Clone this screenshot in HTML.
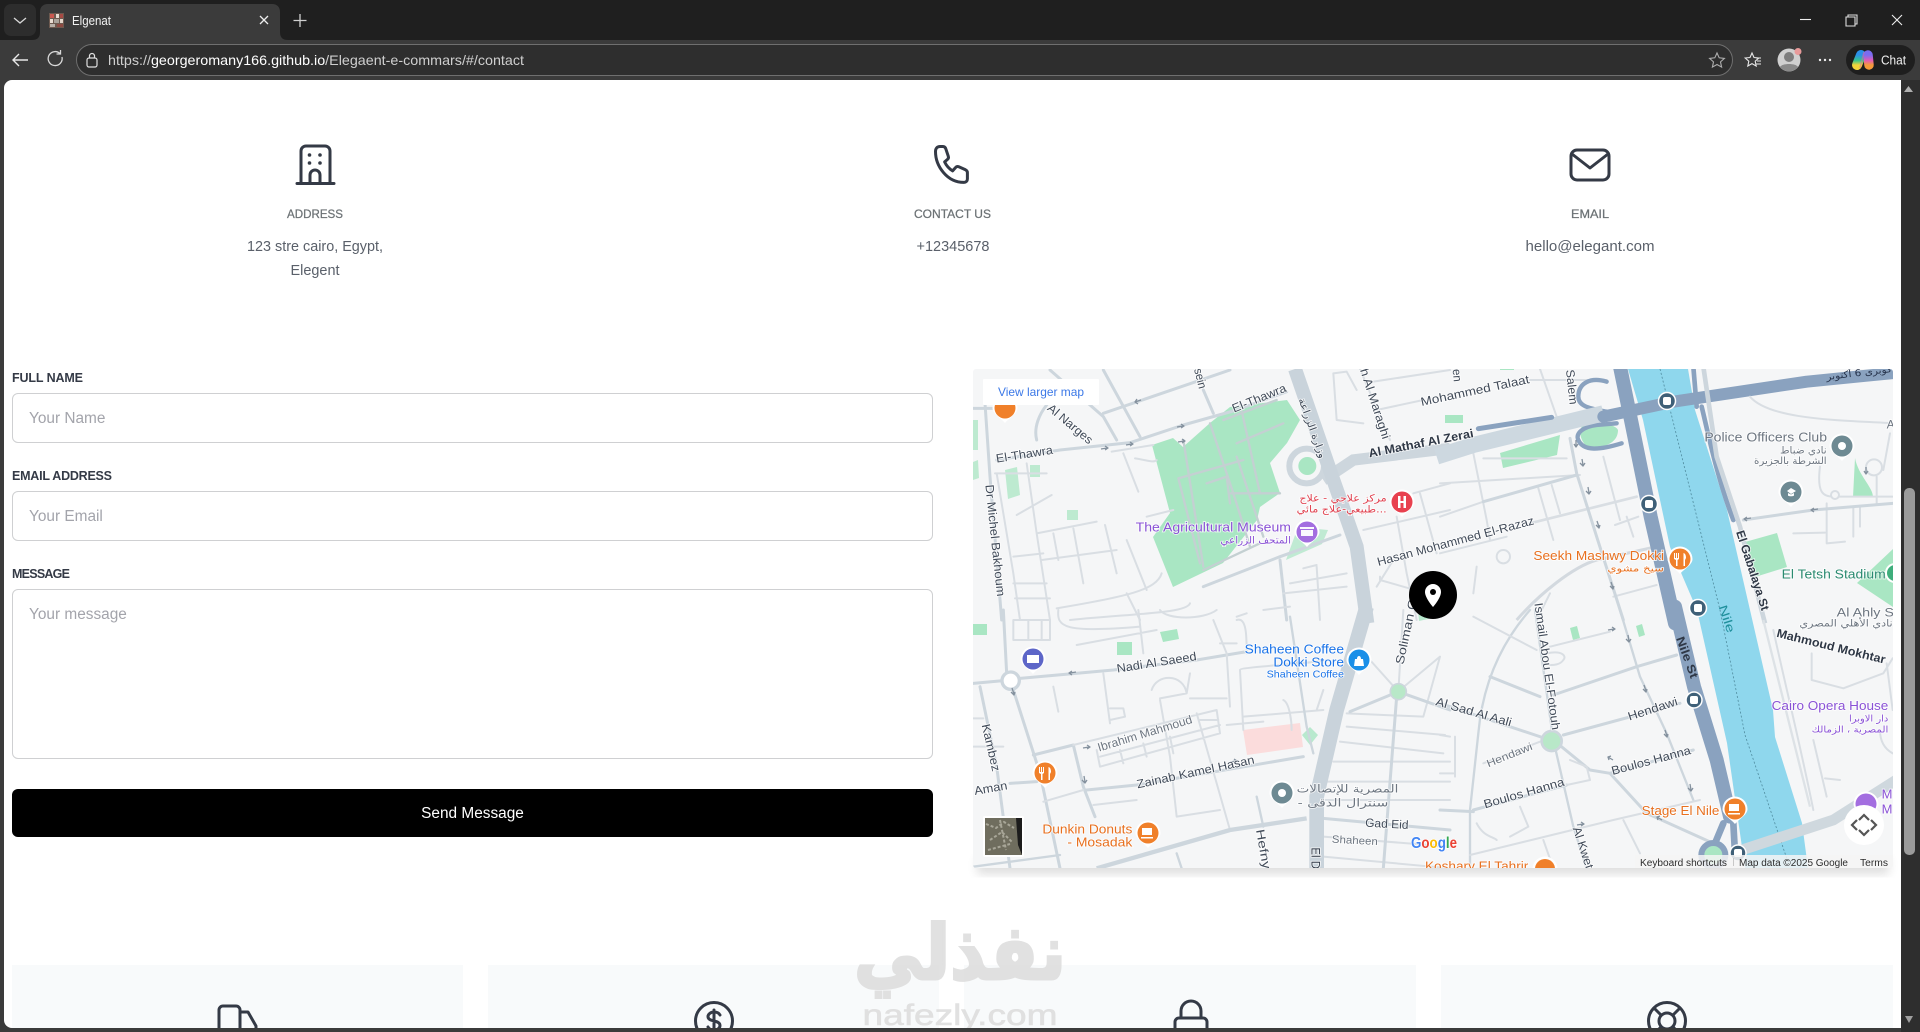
<!DOCTYPE html>
<html lang="en"><head><meta charset="utf-8"><title>Elgenat</title>
<style>
html,body{margin:0;padding:0;width:1920px;height:1032px;overflow:hidden;background:#3b3b3b;font-family:"Liberation Sans",sans-serif}
#v{position:absolute;left:0;top:0}
#page{position:absolute;left:4px;top:80px;width:1897px;height:948px;background:#fff;border-radius:8px 0 0 8px}
.f{position:absolute;left:12px;width:921px;box-sizing:border-box;border:1.3px solid #cfd0d2;border-radius:6px;background:#fff;padding:2px 16px 0;font:15.4px "Liberation Sans",sans-serif;color:#333;outline:0;resize:none;margin:0}
.f::placeholder{color:#a3a4ab;opacity:1}
button{position:absolute;left:12px;top:789px;width:921px;height:48px;border:0;border-radius:6px;background:#000;color:#fff;font:15.4px "Liberation Sans",sans-serif;padding:2px 0 0;margin:0}
.card{position:absolute;top:965px;height:63px;background:#f8fafb}
.ui{font-family:"Liberation Sans",sans-serif}
.lab{font:bold 12.5px "Liberation Sans",sans-serif;fill:#343a46}
.inf{font:12px "Liberation Sans",sans-serif;fill:#6c7275;stroke:#6c7275;stroke-width:.25px}
.val{font:15px "Liberation Sans",sans-serif;fill:#5a606a}
.m text{font-family:"Liberation Sans","DejaVu Sans",sans-serif;font-size:36px;paint-order:stroke;stroke:#fff;stroke-width:5px;stroke-opacity:.75}
.m .r{fill:#414b59}.m .b{fill:#2f3846;font-weight:bold}.m .g{fill:#6d7681}
.m .pu{fill:#8a52d6;font-size:39px}.m .or{fill:#e8701f;font-size:39px}.m .bl{fill:#1a73e8;font-size:39px}
.m .re{fill:#e0414f}.m .te{fill:#2a8a70;font-size:39px}
.m .ar{font-family:"DejaVu Sans",sans-serif;font-size:30px}
.rm{fill:none;stroke:#cdd6dd;stroke-width:9;stroke-linecap:round;stroke-linejoin:round}
.rn{fill:none;stroke:#d9dee3;stroke-width:6;stroke-linecap:round;stroke-linejoin:round}
.rb{fill:none;stroke:#8aa2bf;stroke-linecap:round;stroke-linejoin:round}
.ic{fill:none;stroke:#343a46;stroke-width:3;stroke-linecap:round;stroke-linejoin:round}
</style></head><body>
<div id="page"></div>
<div class="card" style="left:12px;width:451px"></div>
<div class="card" style="left:488px;width:451px"></div>
<div class="card" style="left:964px;width:452px"></div>
<div class="card" style="left:1441px;width:452px"></div>

<input class="f" style="top:393px;height:50px" placeholder="Your Name">
<input class="f" style="top:491px;height:50px" placeholder="Your Email">
<textarea class="f" style="top:589px;height:170px;padding-top:15px;line-height:20px" placeholder="Your message"></textarea>
<button>Send Message</button>

<svg id="v" width="1920" height="1032" viewBox="0 0 1920 1032" xmlns="http://www.w3.org/2000/svg">
<defs>
<clipPath id="mc"><rect x="973" y="369" width="920" height="499" rx="3"/></clipPath>
<clipPath id="pc"><rect x="0" y="80" width="1901" height="948"/></clipPath>
<filter id="bl" x="-20%" y="-20%" width="140%" height="140%"><feGaussianBlur stdDeviation="5"/></filter>
<path id="pin" d="M-12.5,0A12.5,12.5 0 1 1 12.5,0C12.5,6 4,10 0,15C-4,10 -12.5,6 -12.5,0Z" fill="#fff"/>
<linearGradient id="c1" x1="0" y1="0" x2="0" y2="1"><stop offset="0" stop-color="#2b8fe8"/><stop offset=".55" stop-color="#35c58b"/><stop offset="1" stop-color="#f2d43a"/></linearGradient>
<linearGradient id="c2" x1="0" y1="0" x2="0" y2="1"><stop offset="0" stop-color="#7a6cf0"/><stop offset=".55" stop-color="#e45bb5"/><stop offset="1" stop-color="#f59a3a"/></linearGradient>
</defs>

<!-- browser frame -->
<rect x="0" y="0" width="1920" height="40" fill="#1f1f1f"/>
<rect x="0" y="40" width="1920" height="40" fill="#3b3b3b"/>
<rect x="4" y="4" width="32" height="32" rx="7" fill="#2d2d2d"/>
<path d="M14,18l6,5 6,-5" fill="none" stroke="#d8d8d8" stroke-width="1.3"/>
<path d="M32,40c5,0 8,-2 8,-8V12c0,-5 3,-8 8,-8H272c5,0 8,3 8,8V32c0,6 3,8 8,8Z" fill="#3b3b3b"/>
<g>
<rect x="49" y="13" width="15" height="15" fill="#6d5a50"/>
<rect x="50" y="14" width="4" height="4" fill="#c9584f"/><rect x="56" y="14" width="3" height="4" fill="#e8dcd2"/><rect x="60" y="14" width="3" height="4" fill="#a64a44"/>
<rect x="50" y="19" width="3" height="4" fill="#e8dcd2"/><rect x="54" y="19" width="5" height="4" fill="#a9a29a"/><rect x="60" y="19" width="3" height="4" fill="#e3d6cb"/>
<rect x="50" y="24" width="5" height="3" fill="#b8b0a8"/><rect x="57" y="24" width="6" height="3" fill="#8e4a42"/>
</g>
<text class="ui" x="72" y="25" font-size="12.5" fill="#f2f2f2" textLength="39" lengthAdjust="spacingAndGlyphs">Elgenat</text>
<path d="M260,16l8,8M268,16l-8,8" stroke="#eee" stroke-width="1.3"/>
<path d="M300,14v13M293.5,20.5h13" stroke="#d0d0d0" stroke-width="1.3"/>
<path d="M1800,19.5h11" stroke="#eee" stroke-width="1.1"/>
<path d="M1846,17h9v9h-9ZM1848,17v-2h9v9h-2" fill="none" stroke="#ddd" stroke-width="1.1"/>
<path d="M1892,15l10,10M1902,15l-10,10" stroke="#eee" stroke-width="1.1"/>
<path d="M28,60H13M19,54l-6,6 6,6" fill="none" stroke="#e8e8e8" stroke-width="1.4"/>
<path d="M62,57a7,7 0 1 1 -2,-3.5M60.5,50v4h-4" fill="none" stroke="#d9d9d9" stroke-width="1.3"/>
<rect x="76.5" y="44.5" width="1656" height="31" rx="15.5" fill="#2e2e2e" stroke="#6f6f6f"/>
<rect x="87" y="58" width="10" height="9" rx="2" fill="none" stroke="#e0e0e0" stroke-width="1.2"/>
<path d="M89.5,58v-2a2.5,2.5 0 0 1 5,0v2" fill="none" stroke="#e0e0e0" stroke-width="1.2"/>
<text class="ui" x="108" y="65" font-size="14" fill="#cfcfcf" textLength="416" lengthAdjust="spacingAndGlyphs">https://<tspan fill="#fff">georgeromany166.github.io</tspan>/Elegaent-e-commars/#/contact</text>
<path d="M1717,53l2.2,4.8 5.2,.6 -3.9,3.5 1.1,5.2 -4.6,-2.6 -4.6,2.6 1.1,-5.2 -3.9,-3.5 5.2,-.6Z" fill="none" stroke="#aeaeae" stroke-width="1.1"/>
<path d="M1752,53l2,4.5 4.8,.5 -3.6,3.2 1,4.8 -4.2,-2.4 -4.2,2.4 1,-4.8 -3.6,-3.2 4.8,-.5Z" fill="none" stroke="#e8e8e8" stroke-width="1.1"/>
<path d="M1756,58h5M1757,61h4M1756,64h5" stroke="#e8e8e8" stroke-width="1.1"/>
<circle cx="1789" cy="60" r="11.5" fill="#d0d0d0"/><circle cx="1789" cy="57" r="5" fill="#7d7d7d"/><path d="M1780,67c2,-4 16,-4 18,0a11.5,11.5 0 0 1 -18,0Z" fill="#8a8a8a"/>
<circle cx="1798" cy="51.500" r="3.500" fill="#e89a9a"/>
<circle cx="1820" cy="60" r="1.200" fill="#eee"/><circle cx="1825" cy="60" r="1.200" fill="#eee"/><circle cx="1830" cy="60" r="1.200" fill="#eee"/>
<rect x="1846" y="45" width="69" height="30" rx="15" fill="#1e1e1e"/>
<path d="M1861,55L1857,65" stroke="url(#c1)" stroke-width="10" stroke-linecap="round" fill="none"/>
<path d="M1868,55L1869,65" stroke="url(#c2)" stroke-width="9.500" stroke-linecap="round" fill="none"/>
<path d="M1864,52L1860,68" stroke="#e4679f" stroke-width="1.500" opacity=".5"/>
<text class="ui" x="1881" y="64.500" font-size="12.5" fill="#f0f0f0" textLength="25" lengthAdjust="spacingAndGlyphs">Chat</text>
<rect x="1901" y="80" width="19" height="952" fill="#2e2e2e"/>
<rect x="1904" y="488" width="11" height="367" rx="5" fill="#9b9b9b"/>
<path d="M1904,92l4.500,-6 4.500,6Z" fill="#b0b0b0"/><path d="M1905,1016l4,7 4,-7Z" fill="#a0a0a0"/>

<!-- info -->
<g class="ic">
<path d="M297,183.500H334M301,183.500V151a5,5 0 0 1 5,-5H325a5,5 0 0 1 5,5V183.500M310,183.500V175a5,5 0 0 1 10,0V183.500"/>
</g>
<circle cx="309.500" cy="155" r="1.800" fill="#343a46"/><circle cx="320" cy="155" r="1.800" fill="#343a46"/><circle cx="309.500" cy="163" r="1.800" fill="#343a46"/><circle cx="320" cy="163" r="1.800" fill="#343a46"/>
<path class="ic" transform="translate(3,0)" d="M937,146.500h3c1.500,0 2.300,.8 2.800,2.300l2.500,7.500c.4,1.300 .1,2.400 -.9,3.200l-2.800,2.400c2,4.200 4.200,6.700 8,9l3,-3.400c.8,-1 2,-1.200 3.200,-.7l6.700,3c1.200,.6 1.900,1.500 1.900,2.800v6.300c0,2 -1.300,3.500 -3.400,3.500C944,182.500 932.500,166 932.500,151.500c0,-3 1.700,-5 4.500,-5Z"/>
<rect class="ic" x="1571" y="150" width="38" height="30" rx="6"/>
<path class="ic" d="M1572,154l18,14 18,-14"/>
<text class="inf" x="315" y="218" text-anchor="middle" textLength="56" lengthAdjust="spacingAndGlyphs">ADDRESS</text>
<text class="inf" x="952.500" y="218" text-anchor="middle" textLength="77" lengthAdjust="spacingAndGlyphs">CONTACT US</text>
<text class="inf" x="1590" y="218" text-anchor="middle" textLength="38" lengthAdjust="spacingAndGlyphs">EMAIL</text>
<text class="val" x="315" y="251" text-anchor="middle" textLength="136" lengthAdjust="spacingAndGlyphs">123 stre cairo, Egypt,</text>
<text class="val" x="315" y="275" text-anchor="middle" textLength="49" lengthAdjust="spacingAndGlyphs">Elegent</text>
<text class="val" x="953" y="251" text-anchor="middle" textLength="73" lengthAdjust="spacingAndGlyphs">+12345678</text>
<text class="val" x="1590" y="251" text-anchor="middle" textLength="129" lengthAdjust="spacingAndGlyphs">hello@elegant.com</text>

<!-- labels -->
<text class="lab" x="12" y="382" textLength="71" lengthAdjust="spacing">FULL NAME</text>
<text class="lab" x="12" y="480" textLength="100" lengthAdjust="spacing">EMAIL ADDRESS</text>
<text class="lab" x="12" y="578" textLength="58" lengthAdjust="spacing">MESSAGE</text>

<!-- map -->
<rect x="977" y="858" width="912" height="16" fill="#000" opacity=".13" filter="url(#bl)"/>
<g clip-path="url(#mc)">
<rect x="973" y="369" width="920" height="499" fill="#f5f6f7"/>

<!-- green areas -->
<g fill="#a9e6c3">
<path d="M1152,445L1173,438L1183,447L1210,423L1230,407L1287,400L1300,420L1287,443L1270,463L1280,493L1260,507L1257,520L1223,563L1173,587L1153,537L1170,513Z"/>
<path d="M1500,453L1560,435L1557,455L1503,468Z"/><path d="M1445,415h18v8h-18Z"/>
<path d="M1745,542L1777,533L1787,567L1755,577Z"/><path d="M1893,549L1857,583L1893,607Z"/>
<path d="M1855,458C1858,475 1873,487 1873,497H1853Z"/><path d="M1417,600l17,-3 3,20 -18,4Z" opacity=".8"/>
<path d="M1067,510h11v10h-11ZM1030,465h10v12h-10ZM1005,470l12,-3 3,28 -12,4ZM973,462l5,-2 1,18 -6,2ZM973,420h5v30h-5Z" opacity=".75"/>
<path d="M1117,642h15v13h-15ZM1160,632l17,-3 2,10 -16,3ZM973,624h14v11h-14ZM1570,628l7,-2 3,12 -7,2ZM1636,626l6,-2 3,11 -6,2Z"/>
<path d="M1302,735l8,-8 8,8 -8,10Z" opacity=".8"/><path d="M1500,358h14v12h-14Z"/>
<path d="M1286,560l36,-16 6,-14 -30,-3Z" opacity=".7"/>
<path d="M1583,425C1600,422 1615,424 1618,430C1618,440 1610,445 1600,447L1587,447C1580,440 1578,430 1583,425Z"/>
</g>
<path d="M1243,730l57,-7 3,24 -56,8Z" fill="#fbdcdc"/>

<!-- Nile -->
<path d="M1628,369H1688L1695,410L1727,510L1750,610L1773,710L1775,737L1802,823L1808,868H1745L1727,743L1697,610L1670,547L1643,420Z" fill="#8fd7ed"/>
<path d="M1660,369L1720,610L1745,735L1790,868" fill="none" stroke="#4f8b9e" stroke-width=".8" stroke-dasharray="2 2"/>

<g transform="translate(970,360) scale(.33333)">
<path class="rm" d="M80,300L270,270L480,248L640,195L800,150L950,95M400,160L780,30M400,30L510,230M240,30L400,170L440,240M700,90L730,160"/>
<path class="rm" d="M10,145H70M45,130L60,350L95,780M200,240C190,200 210,160 230,135"/>
<path class="rn" d="M170,310L200,520L240,780M75,340H230M80,340L130,640L150,780M200,520L380,485M215,600L440,570M130,590L220,580M250,520L265,600M310,505L340,670M405,495L440,640M130,670H230M135,715H240M140,465L245,405M460,280L505,395M425,275L550,255M495,295C530,300 550,310 560,300M470,540L530,690M575,640C560,690 470,710 260,745M530,470L610,450M470,700L510,780M660,730C650,760 500,760 300,780"/>
<path class="rn" style="stroke:#c4d0d2;stroke-width:7" d="M625,355L690,610M625,355L820,300M640,240L700,620M720,190L790,400L840,560M800,290L880,530M780,400L930,400M810,130L870,400M700,630L870,550M710,370L770,350L780,430M760,180L920,120M800,250L940,190"/>
<path class="rm" d="M700,680L930,590L1110,525M930,600L950,780"/>
<path class="rn" d="M1170,27L1260,240M1210,65L1440,30M1220,150L1360,120M1090,40L1100,180L1180,190M1090,40L1130,35L1160,90M1330,400L1440,370M1180,510L1440,450M1280,470L1310,640L1340,780M1350,400L1400,580M1230,650L1230,660L1440,720M1220,680L1270,600M1000,625L1040,615M960,670L1130,640M940,700L1130,680M880,750L960,740M800,770L830,760M1040,620L1050,780"/>
<circle cx="1010" cy="318" r="52" fill="#f5f6f7" stroke="#cdd6dd" stroke-width="18"/>
<circle cx="1012" cy="318" r="27" fill="#a9e6c3"/>
<path d="M1060,360L1150,300L1440,265" fill="none" stroke="#cdd6dd" stroke-width="34"/>
<path d="M975,27L1090,360L1160,560L1192,790" fill="none" stroke="#c9d3db" stroke-width="42"/>
</g>

<g transform="translate(1440,360) scale(.33333)">
<path class="rn" d="M300,27L350,170M270,60H500M0,370L420,345M0,470L130,425M100,280L140,480L150,540M295,385L340,540M335,375L360,460M490,290L540,480M525,495L595,470M560,470L580,530M0,580L200,530M110,620L100,700M290,780L330,700M520,710L650,675M130,295H380"/>
<path class="rn" style="stroke-width:8" d="M270,490L590,410"/>
<path class="rm" d="M390,235L410,340L470,530L550,780M130,425L410,345"/>
<path d="M230,780C300,700 400,620 470,600L650,560" fill="none" stroke="#d3d9df" stroke-width="9"/>
<circle cx="190" cy="590" r="20" fill="none" stroke="#d9dee3" stroke-width="6"/>
<path class="rb" stroke-width="13" d="M500,65C450,50 415,70 415,110C415,140 450,145 500,155"/>
<path class="rb" stroke-width="13" d="M545,250C480,270 430,275 415,240C405,220 430,200 470,195L530,190"/>
<path d="M-10,290L100,255L490,160" fill="none" stroke="#cdd8e0" stroke-width="48"/>
<path class="rb" stroke-width="15" d="M115,206L335,172"/>
<path class="rb" stroke-width="42" d="M540,20L575,190L632,470L705,790"/>
<path class="rb" stroke-width="36" d="M490,170L700,125L1100,65L1400,35"/>
<path class="rb" stroke-width="14" d="M760,20L770,140M785,140C800,200 830,350 880,480"/>
<path d="M790,20L830,290L900,500L975,790" fill="none" stroke="#cdd6dd" stroke-width="14"/>
<path class="rn" d="M930,110C990,180 1200,180 1358,190M1140,320C1130,400 1150,410 1180,410L1358,410M1310,350V430M1350,220L1330,330M1060,520L1155,518M1160,430L1160,550L1215,545M1240,440V530M1260,440V500"/>
<circle cx="1302" cy="322" r="24" fill="#f5f6f7" stroke="#d9dee3" stroke-width="6"/>
<circle cx="1185" cy="405" r="12" fill="#f5f6f7" stroke="#d9dee3" stroke-width="6"/>
<path class="rm" d="M910,480L1120,450L1358,430"/>
</g>

<g transform="translate(970,610) scale(.33333)">
<path class="rm" d="M100,0L110,190M10,220L100,212L150,205L430,180L680,150L830,125M130,240L210,490L270,775M30,230L80,470L120,775M190,435L310,405L340,530L375,620M350,540L500,525L1000,440M120,520L200,515"/>
<circle cx="122" cy="212" r="26" fill="#fff" stroke="#cdd6dd" stroke-width="10"/>
<path class="rn" d="M10,325H40M10,410H100M220,575L340,540M370,585L500,570M310,405L740,300M380,420L390,470L750,370M680,310L780,660M450,420L460,460M520,400L530,440M600,380L610,430M390,440L750,345M690,330H745M740,300L750,370M130,30H240V90H130ZM175,30V90M215,30V90M265,0C260,50 280,70 510,50M505,0L520,130M320,105L560,60M570,0C590,30 700,30 740,0M570,270L600,440L620,620L750,600M570,265L650,250L660,190M545,240C560,190 640,190 650,250M660,265H770M770,130L780,290M730,30L770,130M750,100H800M800,30C830,20 830,80 830,130M810,180C810,170 1040,160 1070,150M810,180L820,360M820,320L1060,300M770,345L880,335M940,270C960,280 965,340 965,360M1060,240L1040,300M400,190L420,340M420,295H460L465,320L420,330M250,230L265,305"/>
<path class="rm" style="stroke-width:7" d="M960,20L1010,350L1030,430"/>
<path class="rn" d="M1130,350L1425,375M1110,395L1420,430M1090,455H1440M1070,515H1440M1050,570H1440M1060,680L1440,710M1060,740L1440,775M1200,150L1285,245M1300,0L1285,245M1410,140L1290,240M1410,140L1360,320L1130,310"/>
<path class="rm" d="M1140,305L1285,245L1440,300M1280,260L1240,775M1060,625L1440,660"/>
<path d="M380,775L780,660L1010,625" fill="none" stroke="#cdd6dd" stroke-width="13"/>
<path class="rm" style="stroke-width:7" d="M620,730L635,775M860,560L880,650M10,770L270,735"/>
<path d="M1190,-10L1100,300L1040,560L1040,790" fill="none" stroke="#c9d3db" stroke-width="44"/>
<circle cx="1285" cy="245" r="24" fill="#b8e8c8" stroke="#cdd6dd" stroke-width="5"/>
</g>

<g transform="translate(1440,610) scale(.33333)">
<path class="rm" style="stroke-width:7" d="M285,0L340,390L400,650L440,775M270,0C200,80 130,200 115,370L90,600L90,775M540,0L600,200L680,370L760,570"/>
<path class="rm" d="M340,255L590,170L710,135M150,200L300,260M370,375L720,280M0,280L330,390M340,390L450,480L510,490L760,420M510,490L620,610L820,700M100,600L380,525M0,600L100,605"/>
<path class="rn" d="M100,20L290,120M130,460L300,395M380,525L450,510L440,470L390,450M240,590L265,650L210,680M110,640C130,680 160,680 170,690M0,375L30,380M45,380V500M0,490H40M90,735L520,630L780,570M310,690L340,775M550,630L600,730M330,110L510,65M320,130C370,120 380,140 370,150C360,165 340,165 330,165M1000,60C1030,200 1080,400 1120,600M1120,390L1160,560M1155,505L1200,510M1115,210L1210,235L1330,190L1358,145M1115,130V210M1340,160L1358,300M1320,360C1320,400 1340,420 1358,430"/>
<circle cx="335" cy="393" r="30" fill="#b8e8c8" stroke="#cdd6dd" stroke-width="8"/>
<path class="rb" stroke-width="42" d="M705,-10L762,230L830,450L870,620"/>
<path class="rb" stroke-width="20" d="M850,640L825,700M880,640L885,730"/>
<path d="M890,725L1180,630L1400,490" fill="none" stroke="#cfd8de" stroke-width="32"/>
<path d="M970,30L1040,310L1110,590" fill="none" stroke="#dde2e6" stroke-width="7"/>
<circle cx="820" cy="735" r="36" fill="#a9e6c3" stroke="#8aa2bf" stroke-width="18"/>
</g>

<!-- arrows -->
<g fill="none" stroke="#84919e" stroke-width="1.300" stroke-linejoin="round">
<path d="M1135,402l6,-2m-4,-1l-2,3 3,2M1177,427l6,-1m-2,-2l3,2 -3,2M1101,449l6,-1m-2,-2l3,2 -3,2M1126,445l6,-1m-2,-2l3,2 -3,2M1178,442l6,-1m-2,-2l3,2 -3,2"/>
<path d="M1576,440v6m-2,-2l2,3 2,-3M1582,459l1,6m-3,-2l3,3 2,-3M1588,487l1,6m-3,-2l3,3 2,-3M1597,521l2,6m-3,-2l3,3 1,-3M1611,582l2,6m-3,-2l3,3 1,-3"/>
<path d="M1745,519l6,-1m-4,-1l-3,2 3,2M1812,510l6,-1m-4,-1l-3,2 3,2M1866,467v6m-2,-2l2,3 2,-3"/>
<path d="M1070,673l6,-1m-4,-1l-3,2 3,2M1012,688l2,6m-3,-2l3,3 1,-3M1083,748l6,-1m-2,-2l3,2 -3,2M1084,776l1,6m-3,-2l3,3 2,-3M1230,762l6,-1m-2,-2l3,2 -3,2"/>
<path d="M1608,630l6,-1m-2,-2l3,2 -3,2M1628,635l1,6m-3,-2l3,3 2,-3M1644,685l2,6m-3,-2l3,3 1,-3M1665,730l2,6m-3,-2l3,3 1,-3M1690,784l1,6m-3,-2l3,3 2,-3M1577,825l6,-1m-2,-2l3,2 -3,2M1662,820l-5,-3m1,3l-1,-3 3,-1M1613,760l-5,-3m1,3l-1,-3 3,-1"/>
</g>

<!-- pins -->
<g>
<use href="#pin" x="1005" y="408"/><circle cx="1005" cy="408" r="10.500" fill="#f0802a"/>
<use href="#pin" x="1402" y="502"/><circle cx="1402" cy="502" r="10.500" fill="#e8414f"/>
<use href="#pin" x="1307" y="532"/><circle cx="1307" cy="532" r="10.500" fill="#a36ee0"/>
<use href="#pin" x="1680" y="559"/><circle cx="1680" cy="559" r="10.500" fill="#f0802a"/>
<use href="#pin" x="1842" y="446"/><circle cx="1842" cy="446" r="10.500" fill="#6e8a93"/><circle cx="1842" cy="446" r="4" fill="#fff"/>
<use href="#pin" x="1791" y="492"/><circle cx="1791" cy="492" r="10.500" fill="#6e8a93"/>
<use href="#pin" x="1033" y="659"/><circle cx="1033" cy="659" r="10.500" fill="#5d66c8"/>
<use href="#pin" x="1359" y="660"/><circle cx="1359" cy="660" r="10.500" fill="#1a8fe8"/>
<use href="#pin" x="1045" y="773"/><circle cx="1045" cy="773" r="10.500" fill="#f0802a"/>
<use href="#pin" x="1148" y="833"/><circle cx="1148" cy="833" r="10.500" fill="#f0802a"/>
<use href="#pin" x="1282" y="793"/><circle cx="1282" cy="793" r="10.500" fill="#6e8a93"/><circle cx="1282" cy="793" r="4" fill="#fff"/>
<use href="#pin" x="1735" y="809"/><circle cx="1735" cy="809" r="10.500" fill="#f0802a"/>
<use href="#pin" x="1545" y="869"/><circle cx="1545" cy="869" r="10" fill="#f0802a"/>
<use href="#pin" x="1866" y="804"/><circle cx="1866" cy="804" r="10.500" fill="#a36ee0"/>
<circle cx="1895" cy="573" r="10" fill="#fff"/><circle cx="1895" cy="573" r="8" fill="#3fae7c"/>
</g>
<g fill="#fff">
<path d="M1398,496h2.500v5h3v-5h2.500v12h-2.500v-5h-3v5h-2.500Z"/>
<path d="M1300,527h14v2h-14ZM1301,530h12v6h-12Z" opacity=".95"/>
<path d="M1674,553h1v5h1v-5h1v5h1v-5h1v6l-1.500,1v6h-1.500v-6l-2,-1ZM1683,553c2,0 3,2 3,5l-1,2v6h-1.500v-13Z"/>
<path d="M1787,491l4,-3 5,3 -5,3ZM1788,493v2.500c1,1 5,1 6,0V493l-3,1.500Z"/>
<path d="M1027,655h12v8h-12Z"/>
<path d="M1355,659h8l1,7h-10ZM1357,659c0,-4 4,-4 4,0" />
<path d="M1039,767h1v5h1v-5h1v5h1v-5h1v6l-1.500,1v6h-1.500v-6l-2,-1ZM1048,767c2,0 3,2 3,5l-1,2v6h-1.500v-13Z"/>
<path d="M1142,828h10v7h-10ZM1141,837h12v1.500h-12Z"/>
<path d="M1729,804h10v7h-10ZM1728,813h12v1.500h-12Z"/>
</g>
<g>
<circle cx="1667" cy="401" r="8.500" fill="#3f6078" stroke="#fff" stroke-width="1.500"/><rect x="1663" y="397" width="8" height="8" rx="2" fill="#fff"/>
<circle cx="1649" cy="504" r="8.500" fill="#3f6078" stroke="#fff" stroke-width="1.500"/><rect x="1645" y="500" width="8" height="8" rx="2" fill="#fff"/>
<circle cx="1698" cy="608" r="8.500" fill="#3f6078" stroke="#fff" stroke-width="1.500"/><rect x="1694" y="604" width="8" height="8" rx="2" fill="#fff"/>
<circle cx="1694" cy="700" r="8" fill="#3f6078" stroke="#fff" stroke-width="1.500"/><rect x="1690" y="696" width="8" height="8" rx="2" fill="#fff"/>
<circle cx="1738" cy="853" r="8" fill="#3f6078" stroke="#fff" stroke-width="1.500"/><rect x="1734" y="849" width="8" height="8" rx="2" fill="#fff"/>
</g>

<!-- labels -->
<g class="m">
<g transform="translate(970,360) scale(.33333)">
<text class="r" transform="translate(80,308) rotate(-9)" textLength="172" lengthAdjust="spacingAndGlyphs">El-Thawra</text>
<text class="r" transform="translate(792,158) rotate(-22)" textLength="172" lengthAdjust="spacingAndGlyphs">El-Thawra</text>
<text class="r" transform="translate(230,148) rotate(40)" textLength="165" lengthAdjust="spacingAndGlyphs">Al Narges</text>
<text class="r" transform="translate(672,28) rotate(76)" textLength="62" lengthAdjust="spacingAndGlyphs">sein</text>
<text class="r" transform="translate(46,375) rotate(84)" textLength="337" lengthAdjust="spacingAndGlyphs">Dr Michel Bakhoum</text>
<text class="r ar" transform="translate(985,118) rotate(70)" textLength="190" lengthAdjust="spacingAndGlyphs">وزارة الزراعة</text>
<text class="r" transform="translate(1170,30) rotate(72)" textLength="220" lengthAdjust="spacingAndGlyphs">h Al Maraghi</text>
<text class="b" transform="translate(1198,292) rotate(-11)" textLength="320" lengthAdjust="spacingAndGlyphs">Al Mathaf Al Zerai</text>
<text class="r" transform="translate(1225,618) rotate(-15)" textLength="486" lengthAdjust="spacingAndGlyphs">Hasan Mohammed El-Razaz</text>
<text class="r" transform="translate(1355,138) rotate(-12)" textLength="332" lengthAdjust="spacingAndGlyphs">Mohammed Talaat</text>
<text class="re ar" x="1250" y="425" text-anchor="end" textLength="262" lengthAdjust="spacingAndGlyphs">مركز علاجي - علاج</text>
<text class="re ar" x="1250" y="458" text-anchor="end" textLength="270" lengthAdjust="spacingAndGlyphs">طبيعي-علاج مائي...</text>
<text class="pu" x="497" y="515" textLength="466" lengthAdjust="spacingAndGlyphs">The Agricultural Museum</text>
<text class="pu ar" x="963" y="550" text-anchor="end" textLength="212" lengthAdjust="spacingAndGlyphs" style="font-size:30px">المتحف الزراعي</text>
</g>
<g transform="translate(1440,360) scale(.33333)">
<text class="r" transform="translate(378,30) rotate(84)" textLength="105" lengthAdjust="spacingAndGlyphs">Salem</text>
<text class="r" transform="translate(38,28) rotate(85)" textLength="38" lengthAdjust="spacingAndGlyphs">en</text>
<text class="g" x="793" y="245" textLength="368" lengthAdjust="spacingAndGlyphs" style="font-size:38px">Police Officers Club</text>
<text class="g ar" x="1160" y="280" text-anchor="end" textLength="140" lengthAdjust="spacingAndGlyphs">نادي ضباط</text>
<text class="g ar" x="1160" y="312" text-anchor="end" textLength="218" lengthAdjust="spacingAndGlyphs">الشرطة بالجزيرة</text>
<text class="or" x="280" y="600" textLength="392" lengthAdjust="spacingAndGlyphs">Seekh Mashwy Dokki</text>
<text class="or ar" x="672" y="635" text-anchor="end" textLength="170" lengthAdjust="spacingAndGlyphs" style="font-size:28px">سيخ مشوي</text>
<text class="b" transform="translate(888,516) rotate(72)" textLength="250" lengthAdjust="spacingAndGlyphs">El Gabalaya St</text>
<text class="te" x="1025" y="655" textLength="312" lengthAdjust="spacingAndGlyphs">El Tetsh Stadium</text>
<text class="g" x="1190" y="770" textLength="172" lengthAdjust="spacingAndGlyphs">Al Ahly S</text>
<text class="g" x="1340" y="205">A</text>
<text class="b" transform="translate(1160,60) rotate(-7)" textLength="198" lengthAdjust="spacingAndGlyphs" style="font-family:'DejaVu Sans',sans-serif;font-size:28px;stroke:none;fill:#25324a;font-weight:normal">كوبرى 6 أكتوبر</text>
</g>
<g transform="translate(970,610) scale(.33333)">
<text class="r" transform="translate(442,188) rotate(-9)" textLength="242" lengthAdjust="spacingAndGlyphs">Nadi Al Saeed</text>
<text class="r" transform="translate(1300,165) rotate(-78)" textLength="200" lengthAdjust="spacingAndGlyphs">Soliman G</text>
<text class="bl" x="1122" y="130" text-anchor="end" textLength="298" lengthAdjust="spacingAndGlyphs">Shaheen Coffee</text>
<text class="bl" x="1122" y="170" text-anchor="end" textLength="212" lengthAdjust="spacingAndGlyphs">Dokki Store</text>
<text class="bl" x="1122" y="203" text-anchor="end" textLength="232" lengthAdjust="spacingAndGlyphs" style="font-size:31px">Shaheen Coffee</text>
<text class="r" transform="translate(35,345) rotate(77)" textLength="145" lengthAdjust="spacingAndGlyphs">Kambez</text>
<text class="r" transform="translate(15,555) rotate(-10)" textLength="100" lengthAdjust="spacingAndGlyphs">Aman</text>
<text class="g" transform="translate(387,425) rotate(-17)" textLength="295" lengthAdjust="spacingAndGlyphs">Ibrahim Mahmoud</text>
<text class="r" transform="translate(503,535) rotate(-12)" textLength="360" lengthAdjust="spacingAndGlyphs">Zainab Kamel Hasan</text>
<text class="or" x="487" y="670" text-anchor="end" textLength="270" lengthAdjust="spacingAndGlyphs">Dunkin Donuts</text>
<text class="or" x="487" y="710" text-anchor="end" textLength="195" lengthAdjust="spacingAndGlyphs">- Mosadak</text>
<text class="g ar" x="1285" y="548" text-anchor="end" textLength="305" lengthAdjust="spacingAndGlyphs" style="font-size:33px">المصرية للإتصالات</text>
<text class="g ar" x="1255" y="590" text-anchor="end" textLength="272" lengthAdjust="spacingAndGlyphs" style="font-size:33px">- سنترال الدقى</text>
<text class="r" transform="translate(1185,650) rotate(3)" textLength="130" lengthAdjust="spacingAndGlyphs">Gad Eid</text>
<text class="g" transform="translate(1085,698) rotate(3)" textLength="138" lengthAdjust="spacingAndGlyphs" style="font-size:32px">Shaheen</text>
<text class="r" transform="translate(858,660) rotate(80)" textLength="120" lengthAdjust="spacingAndGlyphs">Hefny</text>
<text class="b" transform="translate(1025,712) rotate(90)" textLength="65" lengthAdjust="spacingAndGlyphs" style="font-weight:normal">El D</text>
<text class="or" x="1365" y="782" textLength="310" lengthAdjust="spacingAndGlyphs">Koshary El Tahrir</text>
</g>
<g transform="translate(1440,610) scale(.33333)">
<text class="r" transform="translate(283,-20) rotate(82)" textLength="385" lengthAdjust="spacingAndGlyphs">Ismail Abou El-Fotouh</text>
<text class="te" transform="translate(836,-10) rotate(72)" textLength="85" lengthAdjust="spacingAndGlyphs" style="font-size:36px;fill:#1f8f9c;stroke:none">Nile</text>
<text class="b" transform="translate(708,85) rotate(70)" textLength="130" lengthAdjust="spacingAndGlyphs" style="stroke:none">Nile St</text>
<text class="b" transform="translate(1008,80) rotate(14)" textLength="335" lengthAdjust="spacingAndGlyphs">Mahmoud Mokhtar</text>
<text class="g ar" x="1358" y="50" text-anchor="end" textLength="280" lengthAdjust="spacingAndGlyphs">نادي الأهلي المصري</text>
<text class="pu" x="995" y="300" textLength="350" lengthAdjust="spacingAndGlyphs">Cairo Opera House</text>
<text class="pu ar" x="1345" y="335" text-anchor="end" textLength="118" lengthAdjust="spacingAndGlyphs" style="font-size:28px">دار الاوبرا</text>
<text class="pu ar" x="1345" y="367" text-anchor="end" textLength="230" lengthAdjust="spacingAndGlyphs" style="font-size:28px">المصرية ، الزمالك</text>
<text class="r" transform="translate(568,332) rotate(-18)" textLength="155" lengthAdjust="spacingAndGlyphs">Hendawi</text>
<text class="g" transform="translate(145,472) rotate(-22)" textLength="145" lengthAdjust="spacingAndGlyphs" style="font-size:32px">Hendawi</text>
<text class="r" transform="translate(518,495) rotate(-15)" textLength="245" lengthAdjust="spacingAndGlyphs">Boulos Hanna</text>
<text class="r" transform="translate(135,595) rotate(-16)" textLength="250" lengthAdjust="spacingAndGlyphs">Boulos Hanna</text>
<text class="or" x="605" y="615" textLength="233" lengthAdjust="spacingAndGlyphs">Stage El Nile</text>
<text class="r" transform="translate(398,655) rotate(72)" textLength="130" lengthAdjust="spacingAndGlyphs">Al Kwet</text>
<text class="r" transform="translate(-15,285) rotate(16)" textLength="235" lengthAdjust="spacingAndGlyphs">Al Sad Al Aali</text>
<text class="pu" x="1325" y="565">M</text><text class="pu" x="1325" y="610">M</text>
</g>
</g>

<!-- marker -->
<circle cx="1433" cy="595" r="24" fill="#000"/>
<path d="M1433,584a8,8 0 0 0 -8,8c0,6 8,15 8,15s8,-9 8,-15a8,8 0 0 0 -8,-8Z" fill="#fff"/><circle cx="1433" cy="592" r="3" fill="#000"/>

<!-- google -->
<text x="1411" y="848" font-family="Liberation Sans,sans-serif" font-size="15.5" font-weight="bold" textLength="46" lengthAdjust="spacingAndGlyphs" paint-order="stroke" stroke="#fff" stroke-width="1.500"><tspan fill="#4285f4">G</tspan><tspan fill="#ea4335">o</tspan><tspan fill="#fbbc05">o</tspan><tspan fill="#4285f4">g</tspan><tspan fill="#34a853">l</tspan><tspan fill="#ea4335">e</tspan></text>

<!-- sat thumb -->
<rect x="983" y="816" width="41" height="41" rx="2" fill="#fff"/>
<rect x="985" y="818" width="37" height="37" fill="#6f6d5e"/>
<path d="M986,824l10,4 8,-6 10,6M990,840l12,-8 10,10M1000,820l6,30M988,850l22,-6" stroke="#a8a698" stroke-width="2" fill="none" stroke-dasharray="3 2"/>
<path d="M1016,818h6v37l-4,-10Z" fill="#1c1c1c"/>

<!-- fullscreen -->
<circle cx="1864" cy="825" r="20" fill="#fff"/>
<path d="M1859,820l5,-5 5,5M1859,830l5,5 5,-5M1857,820l-5,5 5,5M1871,820l5,5 -5,5" fill="none" stroke="#555" stroke-width="2.200"/>

<!-- attribution -->
<rect x="1635" y="855" width="258" height="13" fill="#f5f5f5" opacity=".85"/>
<g font-family="Liberation Sans,sans-serif" font-size="10" fill="#2d2d2d">
<text x="1640" y="866" textLength="87" lengthAdjust="spacingAndGlyphs">Keyboard shortcuts</text>
<text x="1739" y="866" textLength="109" lengthAdjust="spacingAndGlyphs">Map data ©2025 Google</text>
<text x="1860" y="866" textLength="28" lengthAdjust="spacingAndGlyphs">Terms</text>
</g>
<path d="M1733.500,858v8" stroke="#c8c8c8"/>
<rect x="983" y="379" width="116" height="26" rx="1" fill="#fff"/>
<text x="998" y="396" font-family="Liberation Sans,sans-serif" font-size="12" fill="#3b78e7" textLength="86" lengthAdjust="spacingAndGlyphs">View larger map</text>
</g>

<!-- footer icons -->
<g clip-path="url(#pc)">
<path class="ic" d="M219,1028V1010a4,4 0 0 1 4,-4H236a4,4 0 0 1 4,4V1028M240,1012h8l8,14v8M219,1030h38"/>
<circle class="ic" cx="714" cy="1021" r="18.500"/>
<path class="ic" d="M714,1010v22M720,1015c-1,-2 -3,-3 -6,-3c-3,0 -6,2 -6,4.500c0,6 12,3 12,9c0,3 -3,4.500 -6,4.500c-3,0 -5,-1 -6,-3"/>
<path class="ic" d="M1181,1018v-7a10,10 0 0 1 20,0v7"/>
<rect class="ic" x="1175" y="1018" width="32" height="26" rx="4"/>
<circle class="ic" cx="1667" cy="1021" r="18.500"/>
<circle class="ic" cx="1667" cy="1021" r="8"/>
<path class="ic" d="M1654,1008l7,7M1680,1008l-7,7M1654,1034l7,-7M1680,1034l-7,-7"/>
<rect x="0" y="1028" width="1901" height="4" fill="#3b3b3b"/>

<!-- watermark -->
<g fill="#dcdcdc" opacity=".85">
<text x="960" y="979" text-anchor="middle" font-family="DejaVu Sans,sans-serif" font-weight="bold" font-size="76" stroke="#dcdcdc" stroke-width="3" textLength="212" lengthAdjust="spacingAndGlyphs">نفذلي</text>
<text x="960" y="1025" text-anchor="middle" font-family="Liberation Sans,sans-serif" font-size="30" stroke="#dcdcdc" stroke-width=".6" textLength="195" lengthAdjust="spacingAndGlyphs">nafezly.com</text>
</g>
</g>
</svg>
</body></html>
